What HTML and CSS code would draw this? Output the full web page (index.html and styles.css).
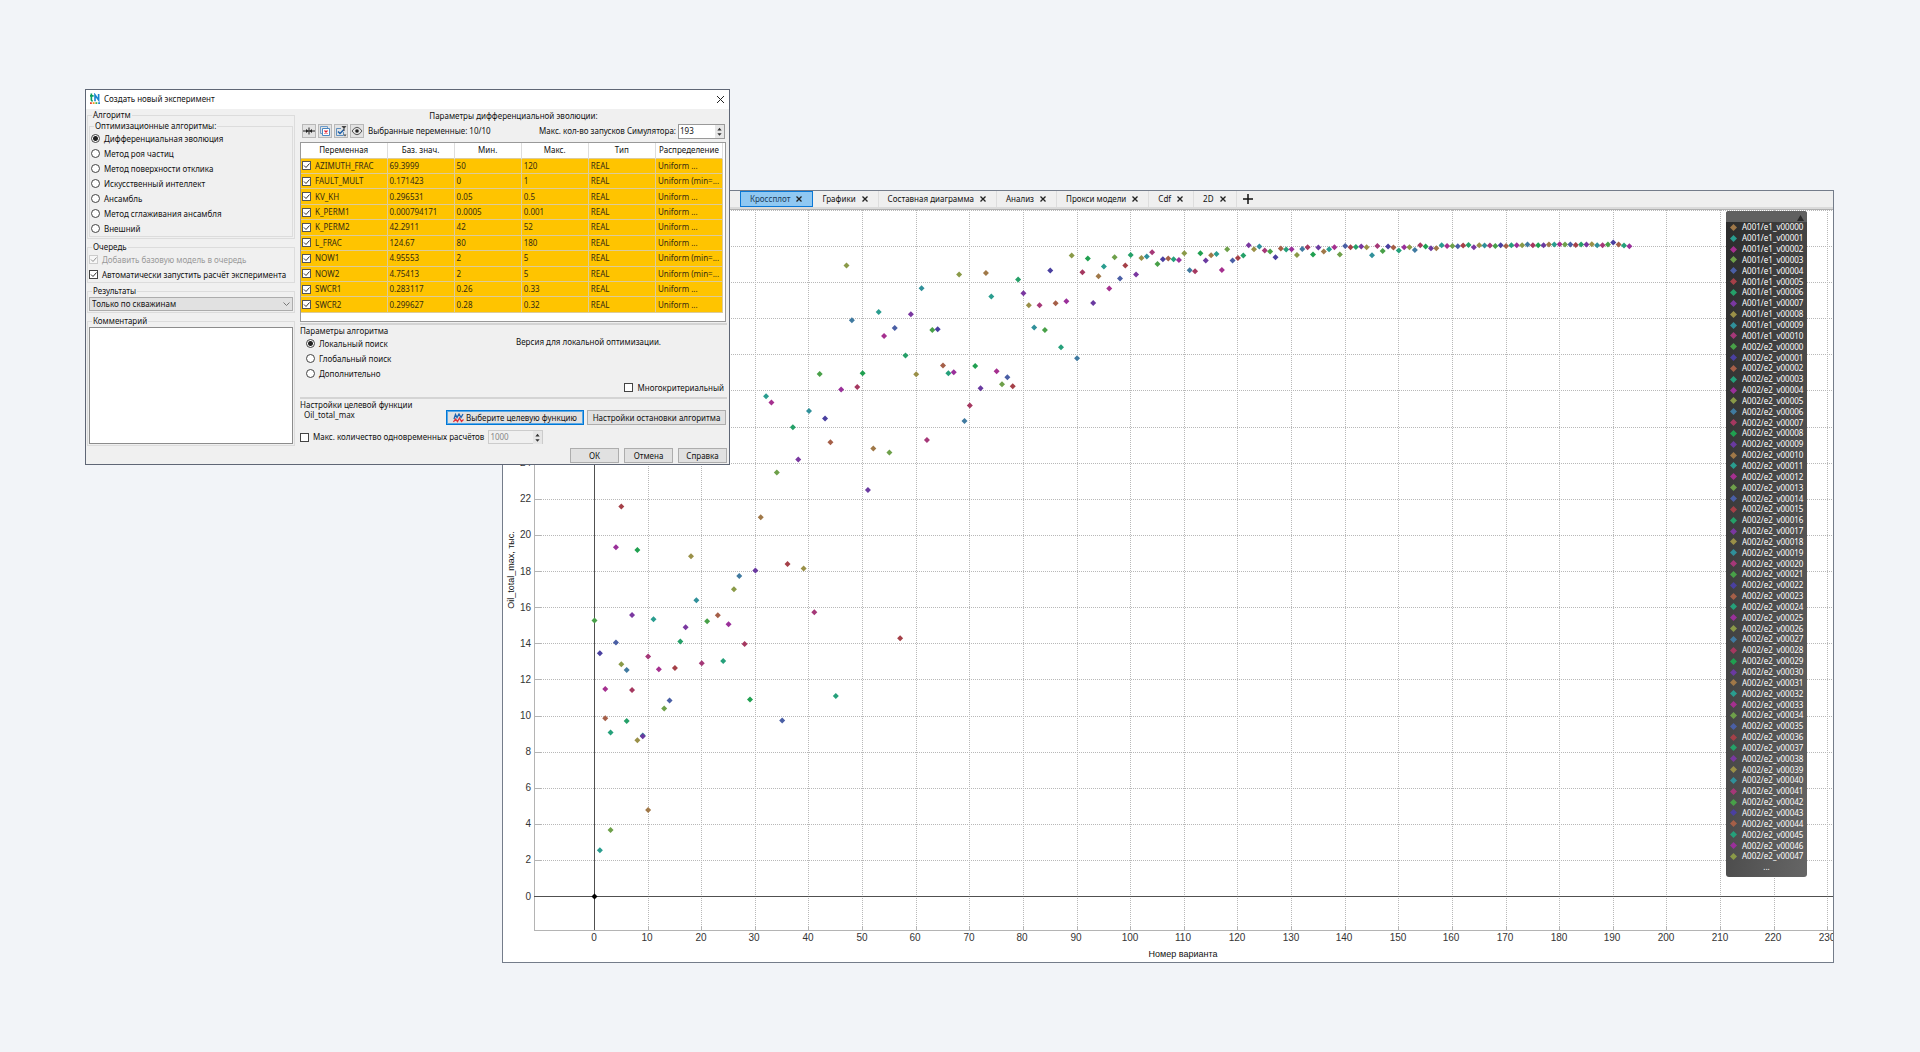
FILE: index.html
```html
<!DOCTYPE html>
<html lang="ru">
<head>
<meta charset="utf-8">
<title>Создать новый эксперимент</title>
<link rel="stylesheet" href="styles.css">
</head>
<body>
<main class="desktop">
  <section class="plot-window" aria-label="Кроссплот">
    <nav class="tabs">
      <button class="tab active" type="button">Кроссплот <svg class="x" viewBox="0 0 6 6"><path d="M.5.5l5 5m0-5l-5 5"/></svg></button>
      <button class="tab" type="button">Графики <svg class="x" viewBox="0 0 6 6"><path d="M.5.5l5 5m0-5l-5 5"/></svg></button>
      <button class="tab" type="button">Составная диаграмма <svg class="x" viewBox="0 0 6 6"><path d="M.5.5l5 5m0-5l-5 5"/></svg></button>
      <button class="tab" type="button">Анализ <svg class="x" viewBox="0 0 6 6"><path d="M.5.5l5 5m0-5l-5 5"/></svg></button>
      <button class="tab" type="button">Прокси модели <svg class="x" viewBox="0 0 6 6"><path d="M.5.5l5 5m0-5l-5 5"/></svg></button>
      <button class="tab" type="button">Cdf <svg class="x" viewBox="0 0 6 6"><path d="M.5.5l5 5m0-5l-5 5"/></svg></button>
      <button class="tab" type="button">2D <svg class="x" viewBox="0 0 6 6"><path d="M.5.5l5 5m0-5l-5 5"/></svg></button>
      <button class="add" type="button" aria-label="Добавить"><svg viewBox="0 0 10 10"><path d="M5 0v10M0 5h10"/></svg></button>
    </nav>
    <div class="plot">
      <svg id="chart" class="chart" viewBox="0 0 1330 752"></svg>
      <aside class="legend">
        <header class="legend-head"><svg viewBox="0 0 7 6"><path d="M0 6L3.500 0L7 6z"/></svg></header>
        <ul id="legend-list"></ul>
        <footer>...</footer>
      </aside>
    </div>
  </section>

  <form class="dialog">
    <header class="titlebar">
      <svg class="logo" viewBox="0 0 11 12"><path d="M1.500 0v7q0 1 1.500 1M0 2.500h4" fill="none" stroke="#0b9f5f" stroke-width="1.800"/><path d="M5.500 8.500V1.500L9.500 7V0.500" fill="none" stroke="#1a86d0" stroke-width="1.800"/><path d="M0 9.500h2v2H0z" fill="#e33b2e"/><path d="M3 9.500h2v2H3z" fill="#f39a1c"/><path d="M6 9.500h2v2H6z" fill="#4bb04a"/><path d="M9 9.500h2v2H9z" fill="#1a86d0"/></svg>
      <h1>Создать новый эксперимент</h1>
      <button class="close" type="button" aria-label="Закрыть"><svg viewBox="0 0 7 7"><path d="M0 0l7 7m0-7l-7 7"/></svg></button>
    </header>
    <div class="body">
      <div class="left">
        <fieldset class="outer">
          <legend>Алгоритм</legend>
          <fieldset class="inner">
            <legend>Оптимизационные алгоритмы:</legend>
            <label class="opt"><input type="radio" name="alg" checked>Дифференциальная эволюция</label>
            <label class="opt"><input type="radio" name="alg">Метод роя частиц</label>
            <label class="opt"><input type="radio" name="alg">Метод поверхности отклика</label>
            <label class="opt"><input type="radio" name="alg">Искусственный интеллект</label>
            <label class="opt"><input type="radio" name="alg">Ансамбль</label>
            <label class="opt"><input type="radio" name="alg">Метод сглаживания ансамбля</label>
            <label class="opt"><input type="radio" name="alg">Внешний</label>
          </fieldset>
        </fieldset>
        <fieldset class="queue">
          <legend>Очередь</legend>
          <label class="opt off"><input type="checkbox" checked disabled>Добавить базовую модель в очередь</label>
          <label class="opt"><input type="checkbox" checked>Автоматически запустить расчёт эксперимента</label>
        </fieldset>
        <fieldset class="outer">
          <legend>Результаты</legend>
          <div class="select-box">
            <select aria-label="Результаты"><option>Только по скважинам</option></select>
            <svg viewBox="0 0 7 4"><path d="M.5.5l3 3l3-3"/></svg>
          </div>
        </fieldset>
        <fieldset class="outer">
          <legend>Комментарий</legend>
          <textarea aria-label="Комментарий"></textarea>
        </fieldset>
      </div>

      <div class="right">
        <h2>Параметры дифференциальной эволюции:</h2>
        <div class="toolbar">
          <button type="button" aria-label="Сжать"><svg viewBox="0 0 12 12"><path d="M0 6h12M6 2.500v7" stroke="#222" fill="none"/><path d="M3 4l2.500 2L3 8zM9 4L6.500 6L9 8z" fill="#222"/></svg></button>
          <button type="button" aria-label="Снять выбор"><svg viewBox="0 0 12 12"><path d="M3 8.500H1.500v-7h7V3" fill="none" stroke="#6f9cc9"/><path d="M3.500 3.500h7v7h-7z" fill="#fff" stroke="#4a86c0"/><path d="M5.500 5.500l3 3m0-3l-3 3" stroke="#e02030" stroke-width="1.300"/></svg></button>
          <button type="button" aria-label="Фильтр"><svg viewBox="0 0 12 12"><path d="M6 3.500H1.500v7h7V7" fill="none" stroke="#5f8fbe"/><path d="M3 6.500l2 2l4-4" fill="none" stroke="#1d5fa8" stroke-width="1.500"/><path d="M6.500 1h5L9.500 3.500V6h-1V3.500zM8.500 9.500h3l-1.500 2z" fill="#444"/></svg></button>
          <button type="button" aria-label="Показать"><svg viewBox="0 0 12 12"><path d="M1 6q5-7.500 10 0q-5 7.500-10 0z" fill="none" stroke="#555"/><circle cx="6" cy="6" r="1.800" fill="#222"/></svg></button>
          <span class="picked">Выбранные переменные: 10/10</span>
          <label class="runs" for="runs">Макс. кол-во запусков Симулятора:</label>
          <span class="spin"><input id="runs" type="text" value="193"><svg viewBox="0 0 8 12"><path d="M2 5L4 2.500l2 2.500zM2 7.500h4L4 10z"/></svg></span>
        </div>
        <div class="table-box">
          <table>
            <thead><tr><th class="name">Переменная</th><th>Баз. знач.</th><th>Мин.</th><th>Макс.</th><th>Тип</th><th>Распределение</th></tr></thead>
            <tbody>
              <tr><td><label><input type="checkbox" checked>AZIMUTH_FRAC</label></td><td>69.3999</td><td>50</td><td>120</td><td>REAL</td><td>Uniform ...</td></tr>
              <tr><td><label><input type="checkbox" checked>FAULT_MULT</label></td><td>0.171423</td><td>0</td><td>1</td><td>REAL</td><td>Uniform (min=...</td></tr>
              <tr><td><label><input type="checkbox" checked>KV_KH</label></td><td>0.296531</td><td>0.05</td><td>0.5</td><td>REAL</td><td>Uniform ...</td></tr>
              <tr><td><label><input type="checkbox" checked>K_PERM1</label></td><td>0.000794171</td><td>0.0005</td><td>0.001</td><td>REAL</td><td>Uniform ...</td></tr>
              <tr><td><label><input type="checkbox" checked>K_PERM2</label></td><td>42.2911</td><td>42</td><td>52</td><td>REAL</td><td>Uniform ...</td></tr>
              <tr><td><label><input type="checkbox" checked>L_FRAC</label></td><td>124.67</td><td>80</td><td>180</td><td>REAL</td><td>Uniform ...</td></tr>
              <tr><td><label><input type="checkbox" checked>NOW1</label></td><td>4.95553</td><td>2</td><td>5</td><td>REAL</td><td>Uniform (min=...</td></tr>
              <tr><td><label><input type="checkbox" checked>NOW2</label></td><td>4.75413</td><td>2</td><td>5</td><td>REAL</td><td>Uniform (min=...</td></tr>
              <tr><td><label><input type="checkbox" checked>SWCR1</label></td><td>0.283117</td><td>0.26</td><td>0.33</td><td>REAL</td><td>Uniform ...</td></tr>
              <tr><td><label><input type="checkbox" checked>SWCR2</label></td><td>0.299627</td><td>0.28</td><td>0.32</td><td>REAL</td><td>Uniform ...</td></tr>
            </tbody>
          </table>
        </div>
        <hr>
        <h3>Параметры алгоритма</h3>
        <div class="params">
          <div class="modes">
            <label class="opt"><input type="radio" name="mode" checked>Локальный поиск</label>
            <label class="opt"><input type="radio" name="mode">Глобальный поиск</label>
            <label class="opt"><input type="radio" name="mode">Дополнительно</label>
          </div>
          <p>Версия для локальной оптимизации.</p>
        </div>
        <label class="opt multi"><input type="checkbox">Многокритериальный</label>
        <hr>
        <div class="goal">
          <div class="goal-name"><h3>Настройки целевой функции</h3><p>Oil_total_max</p></div>
          <button class="btn primary" type="button"><svg viewBox="0 0 11 10"><path d="M1 6L2.500 1.500l1.500 3l2-3.500l2 3.500L10 1" fill="none" stroke="#1b62b0" stroke-width="1.300"/><path d="M.5 9l2-3l2 2.500l2-3.500l2 3.500l2-2" fill="none" stroke="#e0303a" stroke-width="1.300"/></svg>Выберите целевую функцию</button>
          <button class="btn wide" type="button">Настройки остановки алгоритма</button>
        </div>
        <div class="limit">
          <label class="opt"><input type="checkbox">Макс. количество одновременных расчётов</label>
          <span class="spin off"><input type="text" value="1000" disabled aria-label="Макс. количество"><svg viewBox="0 0 8 12"><path d="M2 5L4 2.500l2 2.500zM2 7.500h4L4 10z"/></svg></span>
        </div>
        <footer class="actions">
          <button class="btn" type="button">ОК</button>
          <button class="btn" type="button">Отмена</button>
          <button class="btn" type="button">Справка</button>
        </footer>
      </div>
    </div>
  </form>
</main>
<script src="chart.js"></script>
</body>
</html>
```
FILE: styles.css
```css
* { box-sizing: border-box; }
body {
  margin: 0;
  background: #f2f4f8;
  color: #111;
  font: 8px/10px "Noto Sans", "Open Sans", sans-serif;
}
button, input, select, textarea { font: inherit; color: inherit; margin: 0; }
h1, h2, h3, p, ul { margin: 0; padding: 0; font-size: 8px; font-weight: 400; }
svg { display: block; flex: none; }
.desktop { position: relative; min-height: 100vh; overflow: hidden; }

/* plot window */
.plot-window {
  position: absolute;
  left: 502px;
  right: 86px;
  top: 190px;
  background: #fff;
  border: 1px solid #747c8a;
}
.tabs {
  display: flex;
  height: 19px;
  padding: 0 0 2px 237px;
  background: #efefef;
  border-bottom: 1px solid #b0b0b0;
  box-shadow: inset 0 -2px #dadada;
}
.tab, .add {
  display: flex;
  align-items: center;
  gap: 6px;
  padding: 0 10px 0 9px;
  border: 0;
  border-right: 1px solid #ddd;
  background: none;
  white-space: nowrap;
}
.tab.active { background: #90c8f2; border: 1px solid #0a78d6; color: #1b3c5c; }
.x { width: 6px; height: 6px; fill: none; stroke: #222; stroke-width: 1.3; }
.add { padding: 0 6px; border: 0; }
.add svg { width: 10px; height: 10px; stroke: #111; stroke-width: 1.500; }
.plot { position: relative; }
.chart { width: 100%; height: auto; font: 10px "Liberation Sans", Arial, sans-serif; fill: #333; }
.chart .title { font-size: 9px; fill: #111; }
.grid { stroke: #b8b8b8; stroke-dasharray: 1 1; }
.frame { stroke: #b4b4b4; fill: none; }
.axis { stroke: #505050; }
.legend {
  position: absolute;
  top: 1px;
  right: 26px;
  width: 81px;
  height: 666px;
  display: flex;
  flex-direction: column;
  border-radius: 3px;
  background: linear-gradient(100deg, #2b2b2b, #666);
  color: #fff;
  overflow: hidden;
}
.legend-head { display: flex; justify-content: flex-end; height: 11px; padding: 4px 3px 0 0; background: #606060; }
.legend-head svg { width: 7px; height: 6px; fill: #2a2a2a; }
.legend ul { display: flex; flex-direction: column; height: 640px; list-style: none; }
.legend li { display: flex; flex: 1; align-items: center; gap: 5px; padding-left: 4px; line-height: 10px; }
.legend li svg { width: 7px; height: 7px; }
.legend footer { text-align: center; line-height: 10px; }

/* dialog */
.dialog {
  position: absolute;
  left: 85px;
  top: 89px;
  width: 645px;
  background: #f0f0f0;
  border: 1px solid #5f6675;
}
.titlebar { display: flex; align-items: center; gap: 4px; height: 19px; padding: 0 5px 1px 4px; background: #fff; }
.logo { width: 10px; height: 12px; }
.close { margin-left: auto; padding: 0; border: 0; background: none; }
.close svg { width: 7px; height: 7px; stroke: #222; fill: none; }
.body { display: grid; grid-template-columns: 208px 1fr; gap: 5px; padding: 1px 2px 1px 1px; }
.left { display: flex; flex-direction: column; gap: 3px; }
fieldset { min-width: 0; margin: 0; padding: 0 1px; border: 1px solid #dcdcdc; }
fieldset.outer { padding: 1px; }
fieldset.outer > .inner { padding: 0 1px; }
legend { margin-left: 3px; padding: 0 1px; line-height: 10px; }
.opt { display: flex; align-items: center; gap: 4px; height: 15px; white-space: nowrap; }
.opt.off { color: #999; }
input[type="radio"], input[type="checkbox"] {
  flex: none;
  appearance: none;
  width: 9px;
  height: 9px;
  border: 1px solid #444;
  background: #fff;
}
input[type="radio"] { border-radius: 50%; }
input[type="radio"]:checked { background: radial-gradient(circle, #222 2px, #fff 3px); }
input[type="checkbox"]:checked {
  background: #fff url("data:image/svg+xml,%3Csvg xmlns='http://www.w3.org/2000/svg' viewBox='0 0 7 7'%3E%3Cpath d='M1 3.500l2 2l3.500-4' fill='none' stroke='%23333'/%3E%3C/svg%3E") center / 7px 7px no-repeat;
}
input[type="checkbox"]:disabled { border-color: #aaa; opacity: .5; }
.select-box { position: relative; display: flex; }
.select-box select { appearance: none; width: 100%; height: 14px; padding: 0 2px; border: 1px solid #acacac; border-radius: 0; background: #e1e1e1; }
.select-box svg { position: absolute; right: 3px; top: 5px; width: 7px; height: 4px; fill: none; stroke: #777; }
textarea { display: block; width: 100%; height: 117px; border: 1px solid #8c8c8c; background: #fff; resize: none; }

.right { display: flex; flex-direction: column; min-width: 0; padding-top: 1px; }
h2 { text-align: center; line-height: 10px; }
.toolbar { display: flex; align-items: center; gap: 2px; height: 16px; margin: 2px 2px 3px; }
.toolbar button { padding: 0; width: 14px; height: 14px; border: 1px solid #b8b8b8; background: #e3e3e3; }
.toolbar button svg { width: 12px; height: 12px; }
.picked { margin-left: 2px; white-space: nowrap; }
.runs { margin-left: auto; white-space: nowrap; }
.spin { display: flex; align-items: center; width: 47px; height: 15px; border: 1px solid #999; background: #fff; }
.spin input { flex: 1; min-width: 0; width: 10px; padding: 0 1px; border: 0; background: none; }
.spin svg { width: 9px; height: 13px; background: #e6e6e6; fill: #333; }
.table-box { height: 180px; margin-right: 1px; border: 1px solid #999; background: #fff; }
table { width: 422px; height: 170px; table-layout: fixed; border-collapse: collapse; }
th { height: 15px; padding: 0; font-weight: 400; border-right: 1px solid #ddd; text-align: center; }
.name { width: 86px; }
td { padding: 0 0 0 2px; border: 1px solid #dccb9a; border-left: 0; background: #ffc400; color: #352b12; white-space: nowrap; overflow: hidden; }
td label { display: flex; align-items: center; gap: 4px; }
td:first-child { padding-left: 1px; }
td input[type="checkbox"] { border-color: #555; }
hr { width: 100%; margin: 1px 0; border: 0; height: 2px; background: #d4d4d4; }
h3 { line-height: 10px; }
.params { display: flex; height: 44px; padding-left: 6px; }
.modes { width: 210px; }
.params p { padding-top: 1px; }
.multi { align-self: flex-end; margin-right: 3px; height: 15px; }
.multi + hr { margin: 2px 0 1px; }
.goal { display: flex; align-items: flex-end; gap: 3px; }
.goal-name { flex: 1; height: 25px; white-space: nowrap; }
.goal-name p { padding-left: 4px; }
.btn { display: flex; justify-content: center; align-items: center; gap: 2px; width: 49px; height: 15px; padding: 0; border: 1px solid #adadad; background: #e1e1e1; white-space: nowrap; }
.btn.primary { width: 138px; border-color: #0078d7; box-shadow: inset 0 0 0 1px #5aa9e6; }
.btn svg { width: 11px; height: 10px; }
.btn.wide { width: 139px; margin-right: 1px; }
.limit { display: flex; align-items: center; gap: 4px; height: 14px; margin: 5px 0 4px; }
.spin.off { width: 55px; height: 14px; border-color: #ccc; background: #f0f0f0; color: #888; }
.actions { display: flex; justify-content: flex-end; gap: 5px; }
```
FILE: chart.js
```js
const palette = ['#a07848', '#2a9d8f', '#a5308f', '#6ea04a', '#4a5fa5', '#a54048', '#25a068',
  '#7a38a0', '#9a9048', '#30909a', '#a53878', '#48a048', '#4a40a0', '#a55f48', '#25a07a',
  '#9a309a', '#8a9a48', '#407aa0', '#a53860', '#20a050', '#6a3aa0'];

// Depth of every sample below the top of the window; 54.18 steps make one unit of the y axis.
const first = [2138, 1999, 1515, 1938, 1376, 968, 1611, 1293, 1669, 1655, 1418];
const second = [
  1310, 1408, 1603, 1646, 1090, 1441, 1458, 1518, 1098, 1657,
  1878, 1306, 1456, 1574, 1550, 1452, 1373, 1330, 1117, 1249,
  1438, 1312, null, 1294, 1431, 1321, 1216, 1176, 1380, 1547,
  1160, 1000, 637, 656, 866, 1610, 1140, 730, 827, 1154,
  681, 1285, 570, 704, 775, 1536, 617, 245, 409, 609,
  568, 918, 794, 384, 456, 806, 432, 1363, 515, 391,
  571, 313, 768, 438, 436, 545, 568, 565, 272, 711,
  665, 546, 613, 267, 338, 562, 601, 580, 607, 287,
  328, 364, 431, 364, 438, 260, 358, 490, 352, 215,
  523, 265, 224, 357, 277, 248, 314, 220, 284, 245,
  213, 272, 222, 218, 205, 240, 226, 224, 226, 228,
  208, 259, 262, 208, 230, 214, 210, 258, 196, 230,
  222, 215, 184, 196, 188, 200, 203, 220, 194, 197,
  196, 213, 195, 190, 212, 191, 203, 196, 190, 212,
  186, 190, 189, 188, 190, 214, 186, 201, 188, 191,
  200, 190, 190, 198, 184, 188, 193, 193, 184, 186,
  186, 187, 185, 183, 190, 184, 185, 185, 186, 184,
  186, 184, 184, 184, 182, 184, 184, 184, 182, 182,
  181, 182, 182, 183, 182, 182, 181, 184, 184, 182,
  176, 182, 185, 187];

const X = n => 91.5 + n * 5.362;
const Y = v => 686.6 - v * 18.06;
const snap = p => Math.floor(p) + 0.5;
const value = depth => (2138 - depth) / 54.18;
let out = '';
const line = (cls, x1, y1, x2, y2) => {
  out += `<line class="${cls}" x1="${x1}" y1="${y1}" x2="${x2}" y2="${y2}"/>`;
};

for (let n = 10; n <= 230; n += 10) {
  line('grid', snap(X(n)), 0, snap(X(n)), 720);
  line('frame', snap(X(n)), 716, snap(X(n)), 720);
}
for (let v = 2; v <= 38; v += 2) {
  line('grid', 38, snap(Y(v)), 1330, snap(Y(v)));
  line('frame', 31, snap(Y(v)), 38, snap(Y(v)));
}
line('frame', 31.5, 0, 31.5, 721);
line('frame', 31, 720.5, 1330, 720.5);
line('axis', snap(X(0)), 0, snap(X(0)), 720);
line('axis', 31, 686.5, 1330, 686.5);
for (let n = 0; n <= 230; n += 10) {
  out += `<text x="${Math.round(X(n)) - 1}" y="731" text-anchor="middle">${n}</text>`;
}
for (let v = 0; v <= 24; v += 2) {
  out += `<text x="28" y="${Math.round(Y(v)) + 3}" text-anchor="end">${v}</text>`;
}
out += '<text class="title" x="680" y="747" text-anchor="middle">Номер варианта</text>';
out += '<text class="title" transform="translate(11 360) rotate(-90)" text-anchor="middle">Oil_total_max, тыс.</text>';

const dot = (n, depth, color) => {
  if (depth === null) return;
  const x = X(n), y = Y(value(depth));
  out += `<path fill="${color}" d="M${x - 3} ${y}L${x} ${y - 3}L${x + 3} ${y}L${x} ${y + 3}z"/>`;
};
first.forEach((d, n) => dot(n, d, n ? palette[n] : '#000'));
second.forEach((d, n) => dot(n, d, palette[(n + 11) % 21]));
document.getElementById('chart').innerHTML = out;

const names = [];
for (let n = 0; n <= 10; n++) names.push('A001/e1_v' + String(n).padStart(5, '0'));
for (let n = 0; n <= 47; n++) names.push('A002/e2_v' + String(n).padStart(5, '0'));
document.getElementById('legend-list').innerHTML = names.map((name, i) =>
  `<li><svg viewBox="0 0 8 8"><path fill="${palette[i % 21]}" d="M0 4L4 0L8 4L4 8z"/></svg>${name}</li>`).join('');
```
